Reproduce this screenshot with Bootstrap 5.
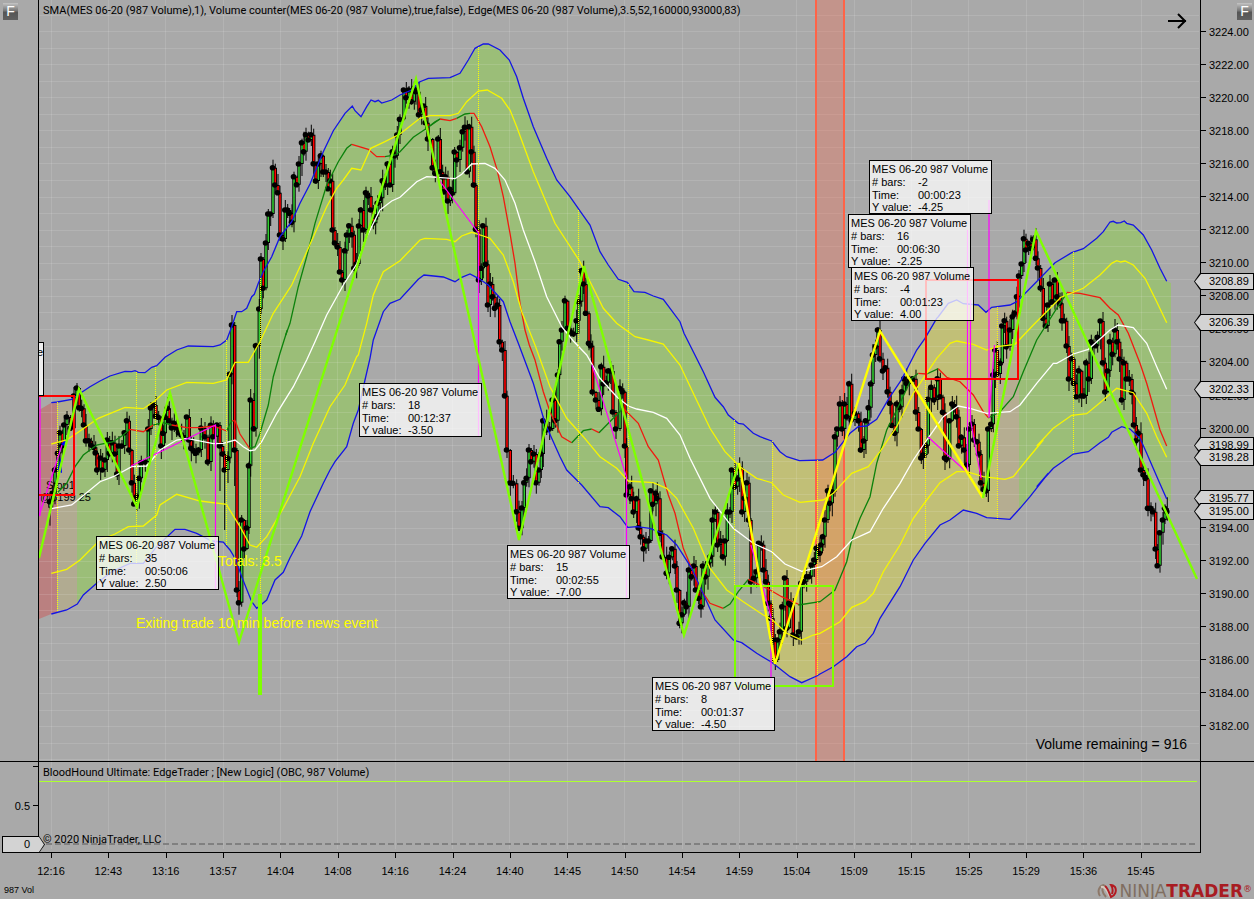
<!DOCTYPE html>
<html lang="en">
<head>
<meta charset="utf-8">
<meta name="viewport" content="width=device-width, initial-scale=1">
<title>MES 06-20 (987 Volume)</title>
<link href="https://cdn.jsdelivr.net/npm/bootstrap@5.3.0/dist/css/bootstrap.min.css" rel="stylesheet">
<style>
body{background:#a9a9a9;color:#000;font:11px/16px "Liberation Sans",Arial,sans-serif}
.axis-l{width:39px;border-right:1px solid #000}
.axis-r{width:54px;border-left:1px solid #000}
.axis-r.prices{padding:24px 0 27px 8px}
.pane{min-width:0}
.main-pane{min-height:600px;border-bottom:1px solid #000}
.sub-pane{height:91px}
.sub-pane .pane{border-bottom:1px solid #000}
.canvas{position:absolute;inset:0;width:100%;height:100%}
.pane-title{padding:3px 0 0 4px;font-family:Roboto,"Liberation Sans",sans-serif}
.copy-line{font-family:Roboto,"Liberation Sans",sans-serif}
.tick-r{position:relative;height:16px}
.tick-r::before{content:"";position:absolute;left:-8px;top:7px;width:5px;height:1px;background:#000}
.tick-l{position:relative;height:16px;text-align:right;padding-right:8px}
.tick-l::after{content:"";position:absolute;right:0;top:7px;width:5px;height:1px;background:#000}
.tick-top{margin-top:-3px}
.tick-half{margin-top:23px}
.times{padding:10px 98px 0 36px;height:30px}
.times span{position:relative;width:30px;text-align:center}
.times span::before{content:"";position:absolute;left:15px;top:-10px;width:1px;height:5px;background:#000}
.price-tag{position:absolute;left:-7px;width:60px;height:17px;margin-top:-9px;padding-left:15px;line-height:17px;top:calc(var(--y)/761*100%);background:#000;clip-path:polygon(0 50%,6px 0,100% 0,100% 100%,6px 100%)}
.price-tag::before,.zero-tag::before{content:"";position:absolute;inset:1px;background:#d3d3d3;z-index:-1;clip-path:inherit}
.price-tag,.zero-tag{z-index:1;isolation:isolate}
.zero-tag{position:absolute;left:2px;bottom:0;width:43px;height:17px;line-height:17px;background:#000;padding-left:22px;clip-path:polygon(0 0,37px 0,100% 50%,37px 100%,0 100%)}
.zero-tag::before{clip-path:polygon(0 0,36px 0,100% 50%,36px 100%,0 100%)}
.ruler-note{position:absolute;left:calc(var(--x)/1161*100%);top:calc(var(--y)/761*100%);width:123px;height:54px;padding:2px 0 0 2px;line-height:13px;background:rgba(255,255,255,.75);border:1px solid #000;white-space:nowrap}
.ruler-note dl{display:grid;grid-template-columns:46px auto;margin:0}
.ruler-note dt,.ruler-note dd{font-weight:400;margin:0;line-height:inherit}
.ruler-note dl>:nth-last-child(-n+2){line-height:11px}
.chart-text{position:absolute;left:calc(var(--x)/1161*100%);top:calc(var(--y)/761*100%);white-space:nowrap}
.big-text{font-size:14px}
.note-yellow{color:#ff0}
.vol-left{position:absolute;right:13px;bottom:9px;font-size:14px}
.f-btn{position:absolute;top:3px;width:15px;height:17px;border:0;padding:0;color:#fff;font-size:14px;line-height:17px;background:linear-gradient(#c4c4c4,#777 45%,#555 55%,#606060)}
.f-left{left:3px}.f-right{right:2px}
.foot-bar{height:16px;padding:0 2px 0 4px;font-size:9px}
.foot-bar .series-name{margin-top:-1px}
.brand-logo{font:17px/16px "DejaVu Sans",sans-serif;color:#806e60;gap:3px}
.brand-logo b{color:#a81c22}
.brand-logo small{font-size:9px;color:#a81c22;vertical-align:5px;line-height:1}
.clip-note{position:absolute;left:0;top:45%;width:5px;height:54px;overflow:hidden;background:#eee;border:1px solid #000;border-left:0;line-height:18px;direction:rtl}
.b{stroke:#1414e6}.y{stroke:#f6f600}.w{stroke:#fff}.g{stroke:#0c820c}.r{stroke:#f01a10}
.line{fill:none;stroke-width:1.3}
.zig{fill:none;stroke:#7fff00;stroke-width:2.4}
.zag{stroke:#ff0}
.rule{fill:none;stroke:#f0f;stroke-width:1.2}
.dots{stroke:#ff0;stroke-dasharray:1 1}
.net{stroke:#fff;stroke-opacity:.12}
</style>
</head>
<body>
<div class="d-flex flex-column min-vh-100">
  <main class="main-pane d-flex flex-grow-1">
    <div class="axis-l position-relative flex-shrink-0"><button class="f-btn f-left" type="button" aria-label="F left axis">F</button></div>
    <section class="pane flex-grow-1 position-relative">
      <svg class="canvas" id="price" viewBox="39 0 1161 761" preserveAspectRatio="none" aria-label="Price chart"></svg>
      <div class="pane-title position-relative">SMA(MES 06-20 (987 Volume),1), Volume counter(MES 06-20 (987 Volume),true,false), Edge(MES 06-20 (987 Volume),3.5,52,160000,93000,83)</div>
      <div class="clip-note" aria-hidden="true">e</div>
      <div id="notes"></div>
      <div class="chart-text big-text note-yellow" style="--x:179;--y:553">Totals: 3.5</div>
      <div class="chart-text big-text note-yellow" style="--x:97;--y:615">Exiting trade 10 min before news event</div>
      <div class="vol-left">Volume remaining = 916</div>
    </section>
    <div class="axis-r prices position-relative flex-shrink-0 d-flex flex-column justify-content-between" id="prices"><button class="f-btn f-right" type="button" aria-label="F right axis">F</button></div>
  </main>
  <div class="sub-pane d-flex">
    <div class="axis-l position-relative flex-shrink-0 d-flex flex-column">
      <div class="tick-l tick-top"></div>
      <div class="tick-l tick-half">0.5</div>
      <div class="zero-tag">0</div>
    </div>
    <section class="pane flex-grow-1 position-relative d-flex flex-column justify-content-between">
      <svg class="canvas" id="logic" viewBox="39 762 1161 90" preserveAspectRatio="none" aria-label="Logic output"></svg>
      <div class="pane-title position-relative">BloodHound Ultimate: EdgeTrader ; [New Logic] (OBC, 987 Volume)</div>
      <div class="copy-line position-relative ps-1 pb-1">© 2020 NinjaTrader, LLC</div>
    </section>
    <div class="axis-r flex-shrink-0"></div>
  </div>
  <div class="times d-flex justify-content-between" id="times"></div>
  <footer class="foot-bar d-flex justify-content-between">
    <span class="series-name">987 Vol</span>
    <span class="brand-logo d-flex align-items-center">
      <svg width="20" height="15" viewBox="0 0 20 15" fill="none"><path d="M7 1C2 2 0 7 3 12M8 1C4 4 5 9 9 13" stroke="#8d7869" stroke-width="2"/><path d="M4 3c4-1 6 4 9 10" stroke="#d4c8bd" stroke-width="2"/><path d="M8 2c3 2 4 7 6 11 4-1 6-6 4-10-1-1-2-2-4-2 2 3 2 6 1 9" stroke="#b31920" stroke-width="2"/></svg>
      <span>NINJA<b>TRADER</b><small>®</small></span>
    </span>
  </footer>
</div>
<script src="https://cdn.jsdelivr.net/npm/bootstrap@5.3.0/dist/js/bootstrap.bundle.min.js"></script>
<script>
// A series is a list of blocks [originX, originY, "x,y x,y ..."]; block points count in thirds of a unit.
const pts = blocks => blocks.flatMap(([ox, oy, s]) => s.trim().split(/\s+/).map(p => {
  const [x, y] = p.split(',').map(Number); return [ox + x / 3, oy + y / 3]; }));
const str = a => a.map(p => p[0].toFixed(1) + ',' + p[1].toFixed(1)).join(' ');
const times = '12:16 12:43 13:16 13:57 14:04 14:08 14:16 14:24 14:40 14:45 14:50 14:54 14:59 15:04 15:09 15:15 15:25 15:29 15:36 15:45'.split(' ');

const upper = pts([
 [0,330,'154,218 172,216 215,208 232,196 245,187 270,170 300,153 330,138 375,124 395,125 405,122 415,127 435,128 455,112 470,107 495,82 530,60 565,48 640,50 660,45'],
 [200,60,'80,840 95,800 110,755 125,755 140,745 155,710 163,703 175,670 190,635 215,590 240,530 275,485 300,430 330,372 370,275 400,212 435,160 457,138 465,152 483,170 500,140 513,120 525,125 535,121 545,129 575,120 600,105 635,90'],
 [400,30,'60,155 85,145 150,143 180,130 205,90 225,55 250,42 265,42 300,60 328,90 350,140 370,205 400,290 440,385 470,450 510,500 545,550 570,585 600,665 625,705 655,748'],
 [600,260,'82,67 102,95 135,97 160,108 190,118 240,185 252,220 280,275 310,335 345,412 370,440 385,465 415,490 430,492 460,520 480,530 515,543 540,575 560,590 598,602'],
 [780,300,'60,482 128,480 165,457 210,400 235,380 260,378 290,358 325,298 365,238 410,150 435,115 470,55'],
 [840,150,'295,500 325,460 350,450 370,461 415,465 438,487 455,472 510,465'],
 [1000,200,'50,305 80,275 120,235 165,188 215,158 250,146 290,115 310,95 330,66 340,64 350,69 362,68 373,63 380,70 400,75 430,105 455,150 480,205 500,244']]);
const lower = pts([
 [0,330,'154,852 200,840 232,822 250,795 290,760 335,725 390,700 430,700 470,650 525,598 555,598 590,610 635,633'],
 [200,330,'70,636 90,660 108,690 125,740 155,815 170,835 200,810 225,750 250,727 270,683 305,618 330,545 370,460 390,420 405,395 440,350 460,280 475,240 495,150 510,85'],
 [200,60,'510,895 520,840 550,755 570,730 600,718 655,658'],
 [400,30,'72,735 130,741 165,755 185,742 210,732 235,745 265,765 310,815 330,875 355,940'],
 [400,340,'400,130 435,250 480,350 500,390 545,435 600,500 625,503 660,530 683,562'],
 [600,260,'85,802 110,800 150,805 200,825 230,855 275,925 300,980 345,1080 400,1140 425,1148 470,1180 515,1207 570,1250 605,1268 650,1248'],
 [780,300,'120,1122 160,1100 200,1070 230,1040 255,1030 280,1000 300,955 360,860 400,780 435,730 480,675 510,660 550,630 590,640 620,653'],
 [840,150,'472,1105 510,1108 540,1075 570,1040 625,970'],
 [1000,200,'110,860 160,805 220,762 265,755 300,728 325,712 335,697 365,680 390,687 420,715 440,760 475,840 500,897']]);
const upperMid = pts([
 [0,330,'154,342 200,330 240,303 295,265 375,232 430,236 465,212 500,180 560,157 640,160 680,150 705,97'],
 [200,60,'145,907 180,845 220,760 275,675 325,565 380,440 410,385 430,360 455,325 483,330 512,265 555,245 600,222 660,175'],
 [400,30,'90,257 150,257 175,250 200,215 235,183 262,180 305,205 330,240 350,290 400,425 465,580 540,695 575,765 610,835'],
 [600,260,'50,190 105,230 145,240 190,252 240,315 280,400 330,505 375,575 420,620 470,655 515,668 550,705 600,727'],
 [780,300,'130,600 160,580 215,520 265,500 300,455 350,380 400,280 470,175 510,130 530,123 580,133 620,150'],
 [840,150,'472,590 525,583 580,525 660,445'],
 [1000,200,'180,293 250,265 300,225 335,190 350,182 362,186 375,183 400,195 435,235 470,305 500,368']]);
const middle = pts([
 [0,330,'154,536 215,525 240,505 300,455 340,440 395,410 440,408 480,360 530,330 560,325 640,341'],
 [200,330,'70,340 105,330 130,350 150,362 165,360 185,335 230,250 280,170 320,90'],
 [200,60,'345,845 380,765 430,675 470,612 500,530 540,450 575,423 600,412 650,365'],
 [400,30,'80,440 165,446 185,433 215,402 255,400 285,415 315,450 345,520 370,600 405,695 440,800 485,890'],
 [400,340,'520,3 560,45 600,115 650,170'],
 [600,260,'85,438 110,447 160,457 200,475 240,525 270,595 330,715 400,805 460,850 515,875 555,912 605,934'],
 [780,300,'125,800 170,770 215,720 270,695 310,625 360,550 400,480 440,420 490,350 535,318 570,325'],
 [840,150,'440,790 510,785 540,765 590,700 640,640'],
 [1000,200,'170,490 220,462 265,448 330,390 355,375 400,383 440,430 470,500 500,568']]);
const lowerMid = pts([
 [0,330,'154,730 200,718 240,690 300,630 345,612 385,590 430,588 470,555 480,525 530,493 600,513 680,523'],
 [200,330,'85,533 120,590 150,645 170,652 200,620 250,535 300,440 340,340 390,230 435,165 470,80'],
 [200,60,'475,885 500,790 520,705 550,635 600,602 660,540'],
 [400,30,'75,625 140,628 165,635 185,618 215,607 250,618 270,625 310,675 340,755 365,845'],
 [400,340,'405,15 450,140 500,235 550,290 600,350 650,385'],
 [600,260,'85,663 160,668 200,685 230,715 280,805 330,925 380,990 430,1025 490,1065 515,1078 560,1120 605,1140 640,1125'],
 [780,300,'120,1000 180,965 215,922 255,905 280,880 310,815 360,735 400,655 440,600 480,548 530,515 560,515'],
 [840,150,'430,980 495,988 520,980 560,930 610,870'],
 [1000,200,'110,738 160,685 215,646 260,641 300,608 350,565 400,578 440,640 470,710 500,772']]);
// Trend line runs: green while rising, red while falling
const trend = [
 ['g',0,330,'154,515 175,485 200,460 225,410 250,375 290,345 340,335 370,315 390,298'],
 ['r',0,330,'390,298 430,305 450,292 460,285'],['g',0,330,'460,285 490,278 515,285'],
 ['r',0,330,'515,285 560,293 600,293 640,288 680,303'],
 ['g',200,330,'80,303 88,285 97,272'],['r',200,330,'97,272 106,273 120,312 150,357'],
 ['g',200,330,'148,355 165,350 180,310 205,225 220,140 240,70 262,0'],
 ['g',200,60,'257,825 270,790 295,680 320,590 345,490 380,375 415,305 440,265 455,253'],
 ['r',200,60,'455,253 505,268 530,290 555,290'],['g',200,60,'555,290 585,285 600,275 640,232 680,205 720,177'],
 ['g',400,30,'90,287 105,275 120,267'],['r',400,30,'120,267 150,272 170,265'],['g',400,30,'170,265 195,252 210,250'],
 ['r',400,30,'210,250 222,250 245,290 270,350 290,415 310,500 330,610 345,700 360,820 375,900 388,945'],
 ['r',400,340,'388,15 405,60 430,155 450,215 485,290 515,308'],['g',400,340,'515,308 550,272 575,267'],
 ['r',400,340,'575,267 597,278'],['g',400,340,'597,278 640,235 670,205'],
 ['r',600,260,'70,445 115,490 145,560 175,600 205,705 225,760 250,865 300,985 330,1030 370,1045'],
 ['g',600,260,'370,1045 390,1032 415,995 445,958'],['r',600,260,'445,958 510,990 545,1010 600,1035'],
 ['g',780,300,'55,915 120,905 165,870 200,785 215,720 240,655 270,590 290,490 320,390 360,310 395,235 415,220'],
 ['r',780,300,'415,220 440,222'],['g',780,300,'440,222 475,206'],['r',780,300,'475,206 500,232 540,245 580,285 610,335 625,353'],
 ['g',840,150,'445,804 480,785 520,740 550,665 590,570 650,475 680,430'],
 ['r',1000,200,'200,277 240,280 300,293 330,325 355,345 385,400 420,490 440,550 480,690 500,738']];
const closes = pts([
 [0,330,'150,515 158,490 165,420 174,370 180,308 187,348 193,285 201,261 212,295 222,198 231,174 238,233 245,235 252,285 258,332 267,332 274,345 282,352 287,368 292,420 302,384 308,420 315,390 322,330 329,370 337,338 345,372 352,432 357,348 366,348 374,308 381,272 388,360 396,458 403,522 411,500 418,445 424,398 436,396 445,297 453,234 462,225 468,258 476,262 484,348 490,310 496,262 503,235 508,272 516,294 523,280 530,294 537,308 545,315 552,325 561,261 568,330 574,355 581,362 588,370 596,360 604,294 615,320 624,396 633,286 640,320 652,285 660,348 668,372'],
 [200,330,'74,420 84,385 90,133 96,-15 104,360 111,780 117,818 125,570 133,657 141,594 147,407 152,210 162,296 168,47'],
 [200,60,'178,747 183,597 190,685 198,549 205,462 212,462 219,323 226,375 234,398 240,525 249,537 256,450 263,450 269,460 276,487 282,350 291,374 297,312 306,248 312,275 318,224 326,240 334,224 341,311 348,363 355,312 363,287 370,336 378,336 385,386 391,362 398,510 405,549 413,561 420,636 427,660 435,572 441,525 448,497 456,524 463,625 470,612 477,498 483,450 491,510 498,398 505,408 513,450 520,490 527,470 533,430 541,415 548,362 556,375 563,312 571,375 578,275 585,287 592,225 600,178 612,90 619,113 627,90 635,125 643,85 648,95 657,164 665,150 672,138 677,188 684,237 698,323 706,340'],
 [400,30,'115,327 121,425 128,440 132,485 137,440 144,513 151,478 157,490 164,366 171,390 180,353 188,305 195,292 202,425 208,290 215,365 222,465 228,598 237,750 244,715 250,587 258,703 264,825 271,762 278,800 285,835 293,825 299,935'],
 [400,340,'307,30 315,167 321,330 331,429 340,430 350,515 357,565 366,504 373,428 380,415 387,330 394,365 402,342 409,428 417,390 424,342 430,242 440,270 449,267 458,180 466,242 474,105'],
 [400,30,'479,935 486,900 495,812 503,895 512,905 521,912 530,872 537,815 545,722 551,762 558,850 567,940'],
 [400,340,'573,17 578,156 588,180 597,208 604,80 611,132 619,128 625,93 632,93 639,216 648,267 660,145 668,155'],
 [600,260,'75,558 80,705 90,680 95,716 101,756 110,716 116,803 122,830 131,866 138,843 146,843 153,692 159,733 168,700 172,715 180,820 188,890 200,940 208,892 217,866 225,918 231,990 239,1090 246,1064 253,1028 260,1040 267,930 275,950 282,918 288,990 296,1015 303,1040 309,918 317,950 324,910 332,890 338,780 346,756 353,855 362,843 369,890 376,843 382,756 390,756 396,630 405,680 413,657 419,625 427,756 434,715 441,668 447,780 453,965 462,955 470,935 477,850 484,854 491,930 498,965 505,1030 513,1075 519,1140 526,1200 533,1140 540,1115 547,1040 555,954 561,1105 568,1030 573,1035 580,1125 590,1130 597,1115 604,970 612,965 620,950 628,950 635,915 643,900 650,865 660,880 664,855 669,830 675,780 684,692 690,730 697,695'],
 [780,300,'165,410 172,387 180,312 187,387 194,312 201,350 208,251 215,360 225,340 236,362 243,450 252,423 258,362 266,323 273,252 279,165 287,140 294,90 300,176 309,213 317,203 323,275 330,310 336,376 345,400 351,312 359,322 366,275 373,236 380,250 388,245 398,236 408,336 416,387 424,474 430,465 438,437 445,298 454,262 463,300 473,236 481,290 489,337 495,474 500,478 509,362 517,312 524,320 530,350 537,437 545,412 553,450 561,495 568,387 576,372 583,420 592,425 597,462 603,548 612,568 619,573 625,387 634,373 640,225 646,150'],
 [840,150,'472,672 481,640 487,528 494,512 500,590 510,540 518,500 524,490 531,440 537,378 545,342 552,266 558,300 566,280 573,295 580,268 588,325 594,354 602,414 610,505 618,528 624,465 630,402 637,455 645,390 652,440 660,460 666,512 673,512 680,588 687,687 695,626 702,700'],
 [1000,200,'230,590 237,512 245,588 252,588 259,488 267,537 274,425 282,435 288,437 293,412 302,363 309,488 316,576 324,513 330,425 338,463 345,390 352,425 359,477 366,600 372,488 380,537 388,537 396,577 402,675 409,722 416,700 423,810 431,825 437,835 444,925 453,925 459,935 467,1047 473,1097 480,998 489,960 495,925 502,935']]);

let s = '';
const band = str([[39,410], ...upper, [1171,283], [1171,502], ...lower.slice().reverse(), [39,619]]);
s += `<defs><clipPath id="band"><polygon points="${band}"/></clipPath></defs><g clip-path="url(#band)">`;
[[39,57,'#ba8080'],[57,77,'#b1ab91'],[77,735,'#9bbe78'],[735,772,'#a2b092'],[772,997,'#c1bf77'],[997,1019,'#b5ad91'],[1019,1171,'#9bbe78']]
  .forEach(([a, b, c]) => s += `<rect x="${a}" y="0" width="${b - a}" height="761" fill="${c}"/>`);
s += '</g>';
for (let i = 0; i < 46; i++) s += `<path class="net" d="M39 ${Math.round(14.5 + i * 16.55) + .5}H1199"/>`;
const net = (a, b) => times.map((t, i) => `<path class="net" d="M${Math.round(50.5 + i * 57.37) + .5} ${a}V${b}"/>`).join('');
s += net(0, 761);
s += '<rect x="816" y="0" width="28" height="761" fill="tomato" fill-opacity=".3"/><path d="M816 0V761M844 0V761" stroke="tomato" stroke-width="2"/>';
// Candles with a round marker on each close
const tall = {0:[4,18],67:[3,45],69:[3,60],73:[3,36]};
let wick = '', frame = '', body = '', dot = '';
closes.forEach(([x, y], i) => {
  const o = i ? closes[i - 1][1] : y + 6, t = Math.min(o, y), b = Math.max(o, y);
  const [h, l] = tall[i] || [1 + (i * 7) % 11, 1 + (i * 5) % 13];
  wick += `M${x.toFixed(1)} ${(t - h).toFixed(1)}V${(b + l).toFixed(1)}`;
  frame += `M${x.toFixed(1)} ${t.toFixed(1)}V${b.toFixed(1)}`;
  body += `<path d="M${x.toFixed(1)} ${(t + 1).toFixed(1)}V${Math.max(t + 1, b - 1).toFixed(1)}" stroke="${y < o ? '#32cd32' : '#f00'}" stroke-width="1.6"/>`;
  dot += `<circle cx="${(x - .5).toFixed(1)}" cy="${y.toFixed(1)}" r="2.8"/>`;
});
s += `<path d="${wick}" stroke="#000"/><path d="${frame}" stroke="#000" stroke-width="3.4"/>${body}${dot}`;
s += '<g font-size="11"><text x="46" y="489">Stop1</text><text x="40" y="501">@3199.25</text></g>';
s += '<path d="M57 471l4-14 1 16zM61 444l5-5v8z" fill="#00f"/>';
trend.forEach(([c, x, y, p]) => s += `<polyline class="line ${c}" points="${str(pts([[x, y, p]]))}"/>`);
[['b', upper], ['b', lower], ['y', upperMid], ['y', lowerMid], ['w', middle]].forEach(([c, a]) => s += `<polyline class="line ${c}" points="${str(a)}"/>`);
[[57,402,612],[136,372,563],[155,367,540],[226,340,545],[260,278,594],[478,47,236],[578,210,483],[628,284,447],[734,420,586],[772,441,662],[817,460,676],[925,338,540],[997,307,520],[1073,252,453]]
  .forEach(([x, a, b]) => s += `<path class="dots" d="M${x + .5} ${a}V${b}"/>`);
['39,516 62,445','40,396 40,516','131,466 215.5,425 215.5,590','436,176 478.5,233 478.5,436','592,365 626.5,477 626.5,599','751,545 771,617 771,690','928,437 967.5,473 967.5,230','970.5,300 970.5,420 981,478','994.5,345 989,418 989,200']
  .forEach(p => s += `<polyline class="rule" points="${p}"/>`);
s += '<path d="M39 396H74V495H39M926 280H1018V379H926Z" fill="none" stroke="red" stroke-width="2"/><rect x="735" y="586" width="98" height="100" fill="none" stroke="#7fff00" stroke-width="2"/><path d="M260 594V695" stroke="#7fff00" stroke-width="4"/>';
s += '<polyline class="zig" points="39,558 79,389 137,507 170,393 239,642 416,79 519,540 584,266 684,635 739,463"/><polyline class="zig zag" points="739,463 775,664 880,331 983,498"/><polyline class="zig" points="983,498 1036,231 1197,579"/>';
s += '<path d="M1168 21H1186M1178 14L1185 21L1178 28" fill="none" stroke="#000" stroke-width="2"/>';
document.getElementById('price').innerHTML = s;
document.getElementById('logic').innerHTML = net(762, 849) + '<path d="M39 781.500H1197" stroke="#adff2f"/><path d="M46 844H1197" stroke="#808080" stroke-width="2" stroke-dasharray="6 3"/>';

document.getElementById('times').innerHTML = times.map(t => `<span>${t}</span>`).join('');
let p = '';
for (let v = 3224; v >= 3182; v -= 2) p += `<div class="tick-r">${v.toFixed(2)}</div>`;
[['3208.89',282],['3206.39',323],['3202.33',390],['3198.99',446],['3198.28',458],['3195.77',499],['3195.00',512]]
  .forEach(([v, y]) => p += `<div class="price-tag" style="--y:${y}">${v}</div>`);
document.getElementById('prices').insertAdjacentHTML('beforeend', p);
document.getElementById('notes').innerHTML = [[96,536,35,'00:50:06','2.50'],[359,383,18,'00:12:37','-3.50'],[507,545,15,'00:02:55','-7.00'],[652,677,8,'00:01:37','-4.50'],[869,160,-2,'00:00:23','-4.25'],[848,214,16,'00:06:30','-2.25'],[851,267,-4,'00:01:23','4.00']]
  .map(([x, y, n, t, v]) => `<div class="ruler-note" style="--x:${x - 39};--y:${y}">MES 06-20 987 Volume<dl><dt># bars:</dt><dd>${n}</dd><dt>Time:</dt><dd>${t}</dd><dt>Y value:</dt><dd>${v}</dd></dl></div>`).join('');
</script>
</body>
</html>
